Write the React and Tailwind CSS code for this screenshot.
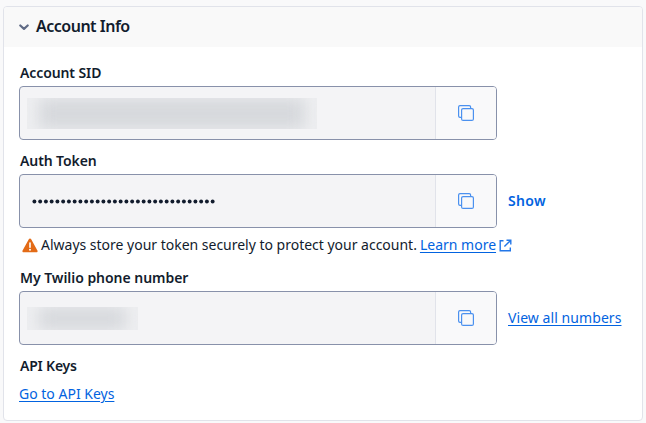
function CopyIcon() {
  return (
    <svg width="16" height="16" viewBox="0 0 16 16" fill="none" stroke="#4b91ef" strokeWidth="1.2">
      <path d="M3.5 12.4H2A1.5 1.5 0 0 1 .6 11V2A1.5 1.5 0 0 1 2 .6h9.2a1.4 1.4 0 0 1 1.4 1.4v1.5" />
      <rect x="3.6" y="3.6" width="11.8" height="11.8" rx="1.5" />
    </svg>
  );
}

function Field({ children, action }) {
  return (
    <div className="flex items-center">
      <div className="flex h-[54px] w-[478px] overflow-hidden rounded-[4px] border border-[#8891aa] bg-[#f4f4f6]">
        <div className="flex flex-1 items-center">{children}</div>
        <div className="flex w-[61px] items-center justify-center border-l border-[#e1e3ea] bg-[#f9f9fa]">
          <CopyIcon />
        </div>
      </div>
      <div className="ml-[11px]">{action}</div>
    </div>
  );
}

function Label({ children, className }) {
  return (
    <div className="flex h-5 items-center pl-px whitespace-nowrap font-semibold">
      <span className={className}>{children}</span>
    </div>
  );
}

function Redacted({ className }) {
  return (
    <div className={"ml-[7px] overflow-hidden bg-[#eeeff1] " + className}>
      <div className="mx-3 h-full bg-[#d6d8dc] blur-[8px]" />
    </div>
  );
}

const link = "text-[#0263e0] underline underline-offset-2 decoration-1";

export default function App() {
  return (
    <div className="h-[423px] w-[646px] overflow-hidden bg-[#f9f9fa] pt-[6px] pl-[3px] font-['Noto_Sans',sans-serif] text-[14px] leading-5 whitespace-nowrap text-[#121c2d]">
      <div className="h-[415px] w-[640px] overflow-hidden rounded-[4px] border border-[#e1e3ea] bg-white">
        <div className="flex h-10 items-center bg-[#f9f9f9] pl-[15px]">
          <svg width="10" height="7" viewBox="0 0 10 7" fill="none" stroke="#606b85" strokeWidth="2.2" strokeLinecap="round" strokeLinejoin="round">
            <path d="M1.3 1.5 5 4.9l3.7-3.4" />
          </svg>
          <h1 className="ml-[7px] -mt-0.5 text-[16px] font-semibold tracking-[-0.5px]">Account Info</h1>
        </div>
        <div className="pt-4 pl-[15px]">
          <Label className="tracking-[-0.1px]">Account SID</Label>
          <div className="mt-[3px]">
            <Field><Redacted className="h-[31px] w-[290px]" /></Field>
          </div>
          <div className="mt-[11px]"><Label className="tracking-[-0.1px]">Auth Token</Label></div>
          <div className="mt-[3px]">
            <Field action={<button className="block font-semibold tracking-[0.3px] text-[#0263e0]">Show</button>}>
              <svg className="ml-3" width="186" height="8" viewBox="0 0 186 8" fill="#121c2d">
                {Array.from({ length: 32 }, (_, i) => (
                  <circle key={i} cx={2.4 + i * 5.75} cy="4.5" r="1.95" />
                ))}
              </svg>
            </Field>
          </div>
          <div className="mt-[7px] flex h-5 items-center">
            <svg className="ml-[3px]" width="16" height="15" viewBox="0 0 16 15">
              <path d="M6.8 1.2a1.4 1.4 0 0 1 2.4 0l6.2 11.2a1.2 1.2 0 0 1-1.1 1.9H1.7a1.2 1.2 0 0 1-1.1-1.9Z" fill="#e36b17" />
              <path d="M8 5v4.2" stroke="#fff" strokeWidth="1.6" strokeLinecap="round" />
              <circle cx="8" cy="11.7" r="1" fill="#fff" />
            </svg>
            <span className="ml-[3px] tracking-[-0.01px]">Always store your token securely to protect your account.</span>
            <a className={link + " ml-[3px]"}>Learn more</a>
            <svg className="ml-[3px]" width="13" height="13" viewBox="0 0 13 13" fill="none" stroke="#2377e8" strokeWidth="1.4">
              <path d="M4.5 1.7H1.2v10.1h10.1V8.5M7.5 1.2h4.3v4.3M11.6 1.4 5.4 7.6" />
            </svg>
          </div>
          <div className="mt-[13px]"><Label className="tracking-[-0.04px]">My Twilio phone number</Label></div>
          <div className="mt-[3px]">
            <Field action={<a className={link + " tracking-[0.07px]"}>View all numbers</a>}>
              <Redacted className="h-[23px] w-[111px]" />
            </Field>
          </div>
          <div className="mt-[11px]"><Label className="tracking-[-0.2px]">API Keys</Label></div>
          <div className="mt-2"><a className={link}>Go to API Keys</a></div>
        </div>
      </div>
    </div>
  );
}
